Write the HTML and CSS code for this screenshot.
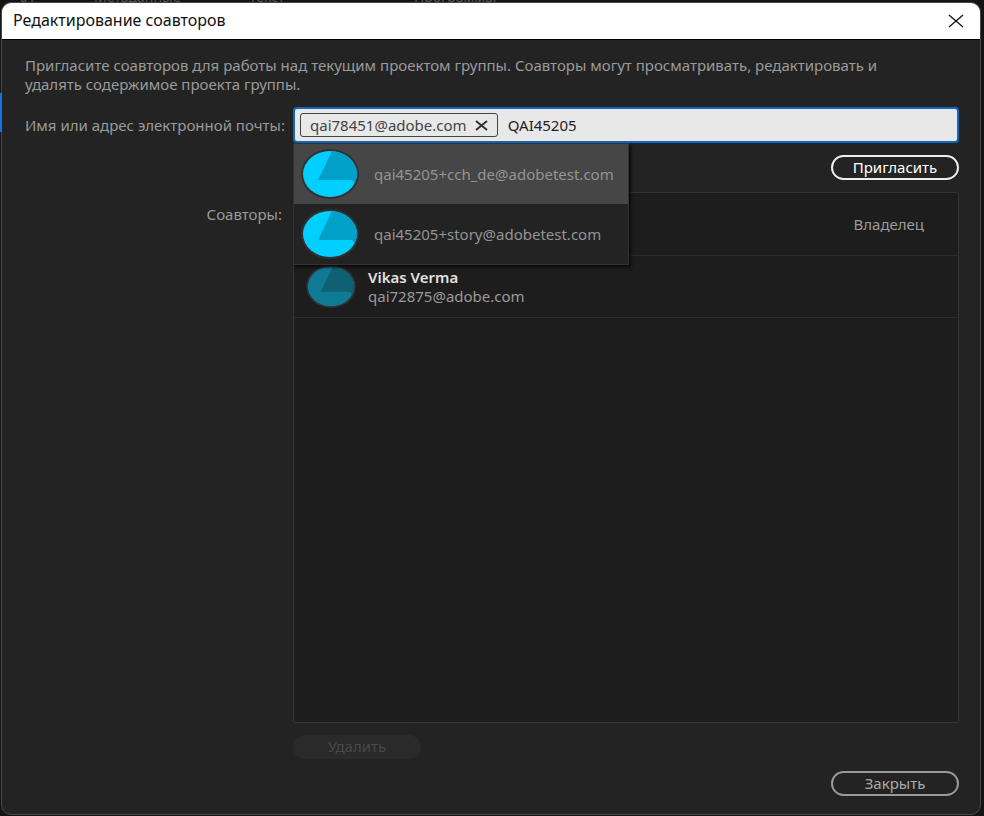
FILE: index.html
```html
<!DOCTYPE html>
<html lang="ru">
<head>
    <meta charset="UTF-8">
    <title>Редактирование соавторов</title>
    <link rel="stylesheet" href="styles.css">
</head>
<body>
    <svg class="defs" aria-hidden="true">
        <symbol id="avatar" viewBox="0 0 58 50">
            <clipPath id="face"><ellipse cx="29" cy="25" rx="27" ry="23"/></clipPath>
            <ellipse class="ring" cx="29" cy="25" rx="29" ry="25"/>
            <ellipse class="light" cx="29" cy="25" rx="27" ry="23"/>
            <path class="dark" clip-path="url(#face)" d="M32 0 17 31H51L54 35 58 38V0Z"/>
        </symbol>
    </svg>

    <div class="strip" aria-hidden="true"></div>
    <div class="tabs" aria-hidden="true">
        <span>_ 01</span><span>Метаданные</span><span>Текст</span><span>Программа:</span>
    </div>

    <div class="dialog" role="dialog" aria-labelledby="title">
        <div class="title-bar">
            <h1 id="title">Редактирование соавторов</h1>
            <button type="button" class="close" aria-label="Закрыть окно">
                <svg width="16" height="14" viewBox="0 0 16 14"><path d="M1 1 15 13M15 1 1 13"/></svg>
            </button>
        </div>
        <form class="content">
            <p class="intro">Пригласите соавторов для работы над текущим проектом группы. Соавторы могут просматривать, редактировать и удалять содержимое проекта группы.</p>

            <label class="label" for="email">Имя или адрес электронной почты:</label>
            <div class="field">
                <span class="chip">qai78451@adobe.com
                    <button type="button" aria-label="Убрать адрес"><svg width="13" height="11" viewBox="0 0 13 11"><path d="M1 1 12 10M12 1 1 10"/></svg></button>
                </span>
                <input type="text" id="email" value="QAI45205" autocomplete="off">
                <ul class="menu">
                    <li class="selected"><a href="#"><svg class="avatar"><use href="#avatar"/></svg>qai45205+cch_de@adobetest.com</a></li>
                    <li><a href="#"><svg class="avatar"><use href="#avatar"/></svg>qai45205+story@adobetest.com</a></li>
                </ul>
            </div>

            <button type="button" class="btn invite">Пригласить</button>

            <span class="label members-label" id="members">Соавторы:</span>
            <ul class="members" aria-labelledby="members">
                <li><span class="role">Владелец</span></li>
                <li>
                    <svg class="avatar"><use href="#avatar"/></svg>
                    <div>
                        <strong>Vikas Verma</strong>
                        <p>qai72875@adobe.com</p>
                    </div>
                </li>
            </ul>

            <button type="button" class="btn remove" disabled>Удалить</button>
            <button type="button" class="btn done">Закрыть</button>
        </form>
    </div>
</body>
</html>
```

FILE: styles.css
```css
* { box-sizing: border-box;}
body,h1,p,ul { margin: 0; padding: 0;}
body {
    display: flex;
    flex-direction: column;
    min-height: 100vh;
    padding: 0 3px 1px 1px;
    background: #141414;
    color: #9a9a9a;
    font: 15px/19px "Noto Sans", "Open Sans", sans-serif;
}
li { list-style: none;}
a { color: inherit; text-decoration: none;}
button,input { font: inherit;}
button { padding: 0; border: none; background: none; cursor: pointer;}
.defs { position: absolute; width: 0; height: 0;}

/* application behind the dialog */
.strip {
    position: absolute;
    left: 0;
    top: 93px;
    width: 2px;
    height: 39px;
    background: #1473e6;
}
.tabs {
    display: grid;
    grid-template-columns: 84px 155px 165px 1fr;
    grid-template-rows: 2px;
    align-items: end;
    height: 2px;
    padding-left: 9px;
    overflow: hidden;
    color: #555;
    font-size: 14px;
    line-height: 10px;
}

.dialog {
    display: flex;
    flex: 1;
    flex-direction: column;
    border: 1px solid #484848;
    border-radius: 10px;
    background: #232323;
    overflow: hidden;
}
.title-bar {
    display: flex;
    align-items: center;
    justify-content: space-between;
    height: 37px;
    padding: 0 16px 1px 11px;
    border-bottom: 1px solid #000;
    background: #fff;
    color: #111;
}
.title-bar h1 { font-size: 16px; font-weight: normal;}
.close { display: flex;}
.close path { fill: none; stroke: #111; stroke-width: 1.3;}

.content {
    display: grid;
    flex: 1;
    grid-template-columns: 259px 1fr;
    grid-template-rows: auto 36px 25px 1fr 24px 25px;
    gap: 12px 9px;
    padding: 16px 21px 18px 23px;
}
.intro { grid-column: 1 / 3; padding: 0 48px 1px 0;}
.label { align-self: center; text-align: right; white-space: nowrap;}
.members-label { align-self: start; padding: 13px 2px 0 0;}

.field {
    position: relative;
    display: flex;
    align-items: center;
    gap: 10px;
    padding: 0 5px;
    border: 2px solid #1467c0;
    border-radius: 4px;
    background: #e8e8e8;
    color: #222;
}
.chip {
    display: flex;
    align-items: center;
    gap: 8px;
    height: 24px;
    padding: 0 9px;
    border: 1px solid #444;
    border-radius: 3px;
    color: #444;
}
.chip button { display: flex;}
.chip path { stroke: #333; stroke-width: 2;}
.field input {
    flex: 1;
    min-width: 0;
    padding: 0;
    border: none;
    outline: none;
    background: none;
    color: #222;
}
.menu {
    position: absolute;
    z-index: 1;
    left: -2px;
    top: 34px;
    width: 336px;
    border: 1px solid #333;
    background: #232323;
    box-shadow: 2px 2px 3px #0a0a0a;
    color: #949494;
}
.menu a {
    display: flex;
    align-items: center;
    gap: 15px;
    height: 60px;
    padding-left: 7px;
}
.menu .selected { background: #464646;}

.avatar {
    --ring: #323030;
    --light: #00cfff;
    --dark: #00a0c8;
    flex: none;
    width: 58px;
    height: 50px;
}
.ring { fill: var(--ring);}
.light { fill: var(--light);}
.dark { fill: var(--dark);}
.members .avatar {
    --light: #0f7a94;
    --dark: #0f6073;
    width: 50px;
    height: 43px;
}

.members {
    padding-top: 1px;
    border: 1px solid #343434;
    border-radius: 3px;
    background: #1d1d1d;
}
.members li {
    display: flex;
    align-items: center;
    gap: 12px;
    height: 62px;
    padding: 0 34px 0 12px;
    border-bottom: 1px solid #2c2c2c;
}
.members strong { display: block; color: #e0e0e0; font-weight: 600;}
.role { margin-left: auto;}

.btn {
    width: 128px;
    height: 25px;
    padding-bottom: 1px;
    border: 2px solid #999;
    border-radius: 13px;
    color: #aaa;
}
.invite { grid-column: 2; justify-self: end; border-color: #eee; color: #fff;}
.remove { grid-column: 2; height: 24px; border-color: #2a2a2a; background: #2a2a2a; color: #484848;}
.done { grid-column: 2; justify-self: end;}
```
